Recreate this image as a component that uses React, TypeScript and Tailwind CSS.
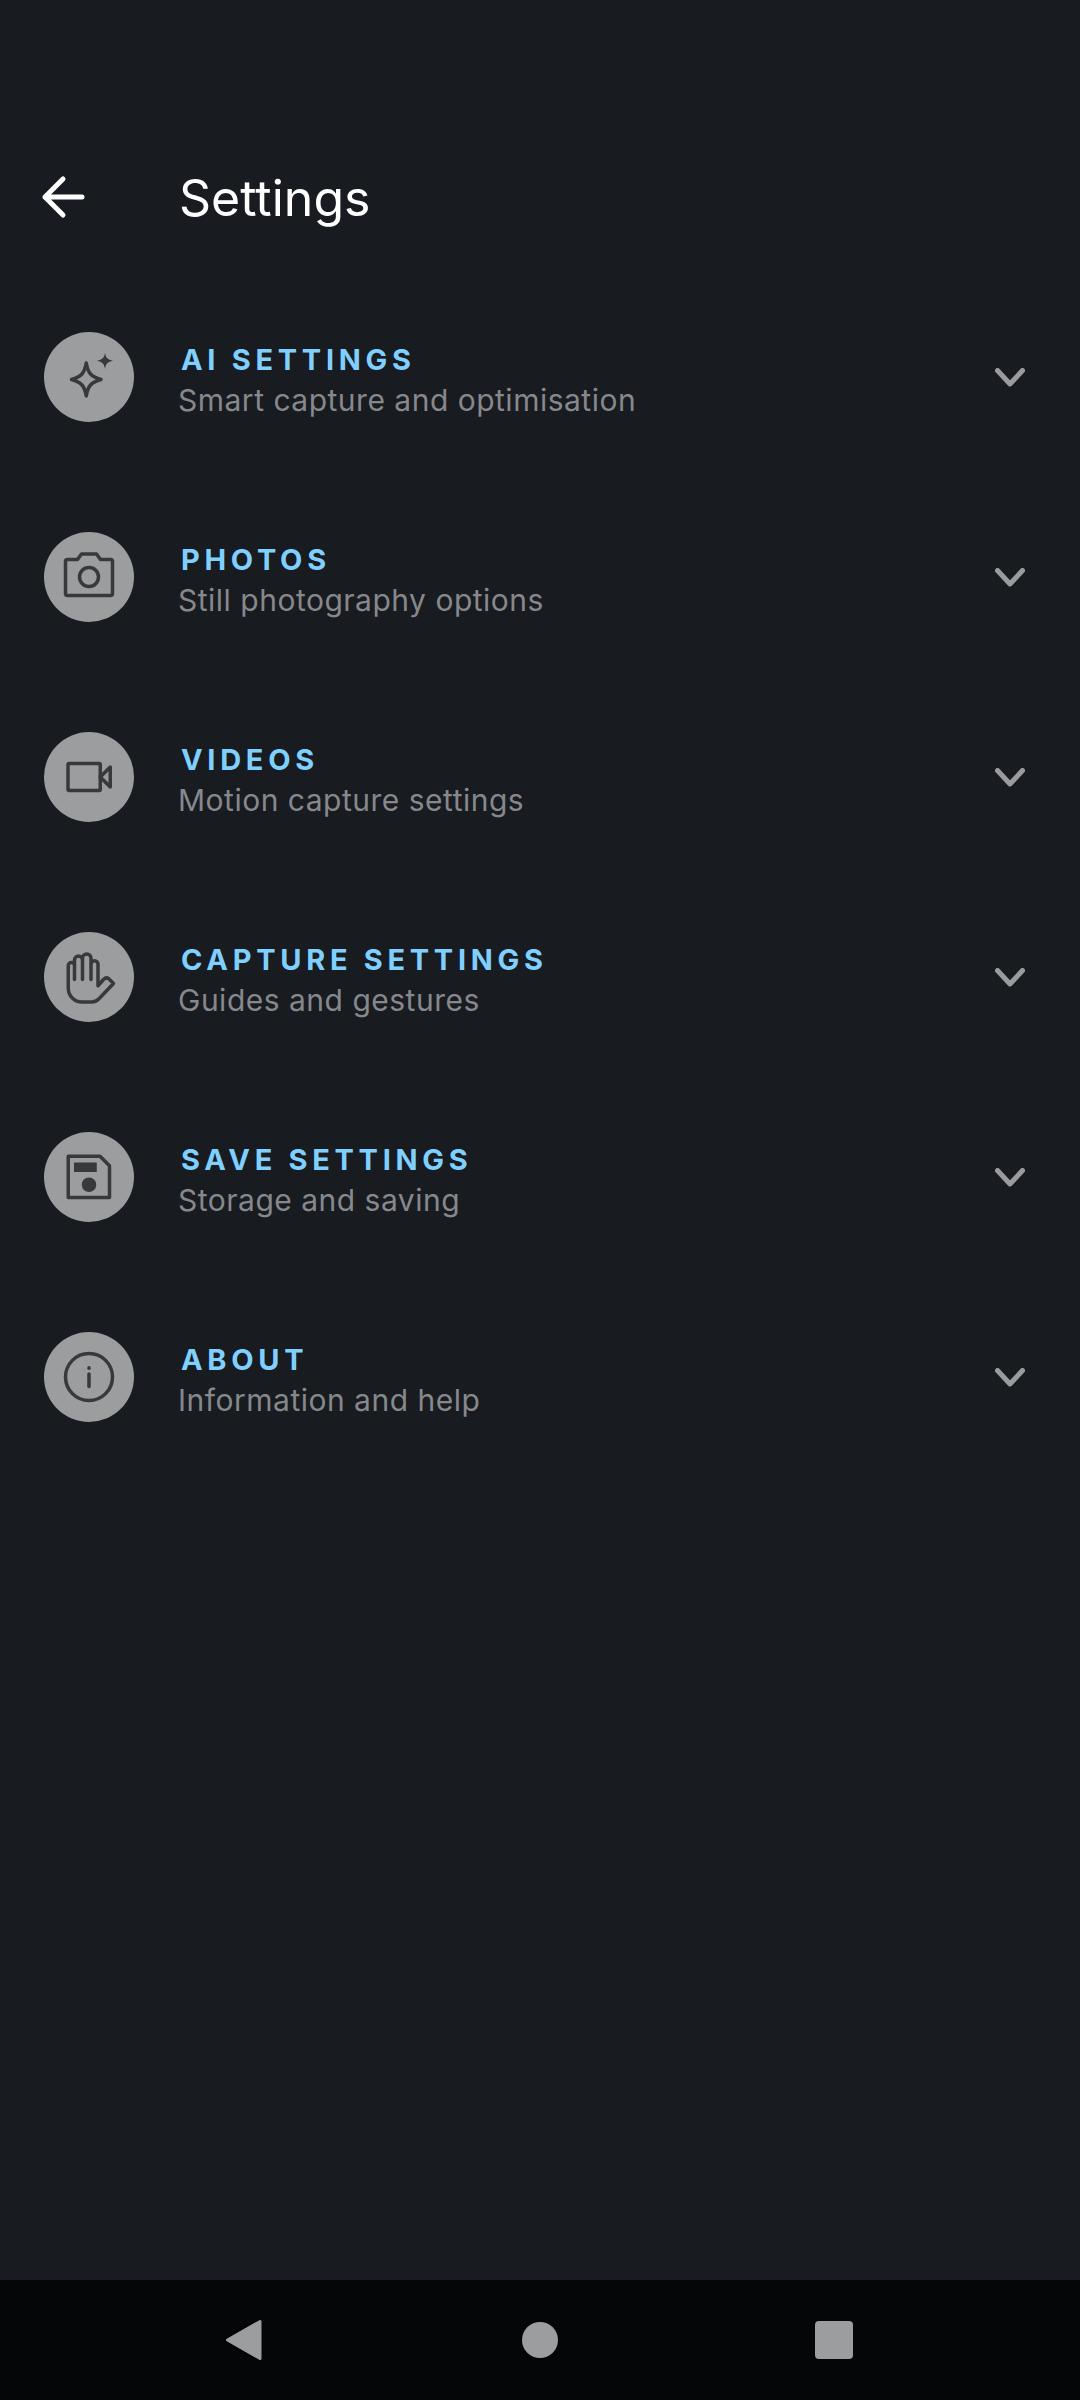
import React from "react";

const F = { fontFamily: '"Inter", "Noto Sans", sans-serif' };

function Glyph({ children }: { children: React.ReactNode }) {
  return (
    <svg width="60" height="60" viewBox="0 0 24 24" fill="none" stroke="#38393a" strokeWidth="1.4" strokeLinejoin="round" strokeLinecap="round">
      {children}
    </svg>
  );
}

const icons: Record<string, React.ReactNode> = {
  ai: (
    <>
      <path d="M10.9 6.4C11.6 10.5 12.8 11.8 16.8 13C12.8 14.2 11.6 15.5 10.9 19.6C10.2 15.5 9 14.2 5 13C9 11.8 10.2 10.5 10.9 6.4Z" />
      <path fill="#38393a" stroke="none" d="M18.4 2.3C18.7 4.3 19.5 5.1 21.6 5.5C19.5 5.9 18.7 6.7 18.4 8.8C18.1 6.7 17.3 5.9 15.2 5.5C17.3 5.1 18.1 4.3 18.4 2.3Z" />
    </>
  ),
  photo: (
    <>
      <path d="M3.4 5H7.4L9 2.8h6L16.6 5h4a.8.8 0 0 1 .8.8v12.8a.8.8 0 0 1-.8.8H3.4a.8.8 0 0 1-.8-.8V5.8a.8.8 0 0 1 .8-.8z" />
      <circle cx="12" cy="12" r="3.8" />
    </>
  ),
  video: (
    <>
      <rect x="3.6" y="6.6" width="12.9" height="10.8" rx="0.4" />
      <path d="M16.5 12L20.5 8V16Z" />
    </>
  ),
  hand: (
    <path d="M6.2 13V7.45a1.25 1.25 0 0 0-2.5 0V16.5a5.5 5.5 0 0 0 5.5 5.5H13a4 4 0 0 0 2.9-1.2L21.8 14.6L19.8 12.6C19.2 12.2 18.4 12.4 17.8 13L15.6 15.5V6.9a1.4 1.4 0 0 0-2.8 0V13M12.8 6.9V4.5a1.7 1.7 0 0 0-3.4 0V13M9.4 5.2a1.6 1.6 0 0 0-3.2 0V8" />
  ),
  save: (
    <>
      <path d="M3.7 3.7H16.4L20.2 7.5V20.2H3.7Z" />
      <rect x="6" y="6.2" width="9.1" height="3.8" fill="#38393a" stroke="none" />
      <circle cx="12" cy="15.1" r="2.9" fill="#38393a" stroke="none" />
    </>
  ),
  info: (
    <>
      <circle cx="12" cy="12" r="9.4" />
      <path d="M12 10.8V15.8" />
      <path d="M12 8.3V8.5" />
    </>
  ),
};

const rows = [
  { key: "ai", title: "AI SETTINGS", sub: "Smart capture and optimisation" },
  { key: "photo", title: "PHOTOS", sub: "Still photography options" },
  { key: "video", title: "VIDEOS", sub: "Motion capture settings" },
  { key: "hand", title: "CAPTURE SETTINGS", sub: "Guides and gestures" },
  { key: "save", title: "SAVE SETTINGS", sub: "Storage and saving" },
  { key: "info", title: "ABOUT", sub: "Information and help" },
];

export default function App() {
  return (
    <div className="w-[1080px] h-[2400px] flex flex-col bg-[#181b20]" style={F}>
      <main className="flex-1 flex flex-col">
        <header className="h-[277px] flex items-start pt-[167px] pl-[41px]">
          <div className="h-[60px] flex items-center">
            <svg width="44" height="44" viewBox="0 0 44 44" fill="none" stroke="#ffffff" strokeWidth="5" strokeLinecap="round" strokeLinejoin="round">
              <path d="M4 22H41M22 4L4 22L22 40" />
            </svg>
          </div>
          <h1 className="ml-[94px] mt-[1px] text-[50px] leading-[60px] font-normal text-white tracking-[0px]">Settings</h1>
        </header>
        {rows.map((r) => (
          <div key={r.key} className="h-[200px] flex items-center pl-[44px] pr-[55px]">
            <div className="w-[90px] h-[90px] rounded-full bg-[#9c9d9f] flex items-center justify-center shrink-0">
              <Glyph>{icons[r.key]}</Glyph>
            </div>
            <div className="flex-1 ml-[44px] pt-[5px] flex flex-col">
              <div className="pl-[3px] text-[29px] leading-[36px] font-bold text-[#7fd0ff] tracking-[4.7px]">{r.title}</div>
              <div className="mt-[4px] text-[30px] leading-[36px] font-normal text-[#86888c] tracking-[0.5px]">{r.sub}</div>
            </div>
            <svg className="mt-[2px]" width="30" height="20" viewBox="0 0 30 20" fill="none" stroke="#9a9b9d" strokeWidth="5" strokeLinecap="round" strokeLinejoin="round">
              <path d="M2.5 2.5L15 16L27.5 2.5" />
            </svg>
          </div>
        ))}
      </main>
      <nav className="h-[120px] bg-[#050608] flex items-center relative">
        <div className="w-[1080px] flex items-center pl-[225px]">
          <svg width="37" height="42" viewBox="0 0 37 42" fill="#9c9d9f" stroke="#9c9d9f" strokeWidth="3" strokeLinejoin="round">
            <path d="M2.5 21L35 2.5V39.5Z" />
          </svg>
          <div className="ml-[260px] w-[36px] h-[36px] rounded-full bg-[#9c9d9f]" />
          <div className="ml-[257px] w-[38px] h-[38px] rounded-[4px] bg-[#9c9d9f]" />
        </div>
      </nav>
    </div>
  );
}
